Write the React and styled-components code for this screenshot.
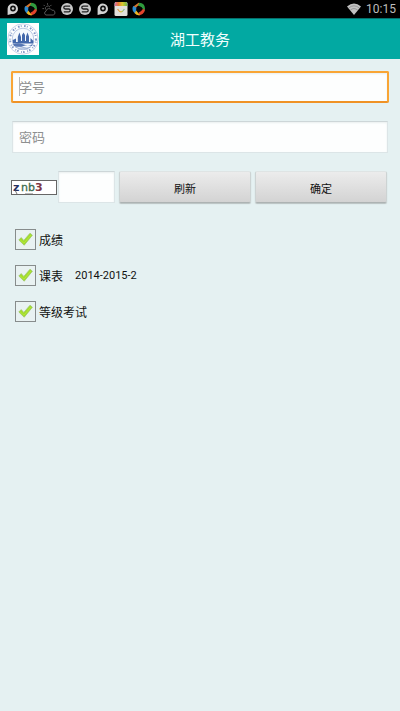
import React, { useState } from 'react';
import styled, { createGlobalStyle, css } from 'styled-components';

const GlobalStyle = createGlobalStyle`
    * {
        box-sizing: border-box;
    }
    body {
        margin: 0;
        background: #e5f1f2;
        color: #111;
        font-family: Roboto, "Noto Sans CJK SC", sans-serif;
    }
`;

const options = [
    { id: 'score', label: '成绩' },
    { id: 'timetable', label: '课表', term: '2014-2015-2' },
    { id: 'exam', label: '等级考试' },
];

function App() {
    const [studentId, setStudentId] = useState('');
    const [password, setPassword] = useState('');
    const [code, setCode] = useState('');
    const [checked, setChecked] = useState({ score: true, timetable: true, exam: true });

    const onToggle = (id) => {
        setChecked({ ...checked, [id]: !checked[id] });
    }

    return (
        <>
            <GlobalStyle />
            <StatusBar>
                <Notifications>
                    <PinIcon />
                    <PinwheelIcon />
                    <WeatherIcon />
                    <SogouIcon />
                    <SogouIcon />
                    <PinIcon />
                    <BagIcon />
                    <PinwheelIcon />
                </Notifications>
                <WifiIcon />
                <Clock>10:15</Clock>
            </StatusBar>
            <Header>
                <SchoolLogo />
                <Title>湖工教务</Title>
            </Header>
            <LoginForm onSubmit={(e) => e.preventDefault()}>
                <Field $active>
                    {studentId === '' && <Caret />}
                    <TextInput
                        type="text"
                        aria-label="学号"
                        placeholder="学号"
                        value={studentId}
                        onChange={(e) => setStudentId(e.target.value)}
                    />
                </Field>
                <Field>
                    <TextInput
                        type="password"
                        aria-label="密码"
                        placeholder="密码"
                        value={password}
                        onChange={(e) => setPassword(e.target.value)}
                    />
                </Field>
                <CodeRow>
                    <CodeGroup>
                        <Captcha />
                        <Field>
                            <TextInput
                                type="text"
                                aria-label="验证码"
                                value={code}
                                onChange={(e) => setCode(e.target.value)}
                            />
                        </Field>
                    </CodeGroup>
                    <Button type="button">刷新</Button>
                    <Button type="submit">确定</Button>
                </CodeRow>
                <Options>
                    {options.map(({ id, label, term }) => (
                        <Option key={id}>
                            <CheckBox>
                                <input
                                    id={id}
                                    type="checkbox"
                                    checked={checked[id]}
                                    onChange={() => onToggle(id)}
                                />
                                {checked[id] && <CheckMark />}
                            </CheckBox>
                            <label htmlFor={id}>{label}</label>
                            {term && <Term>{term}</Term>}
                        </Option>
                    ))}
                </Options>
            </LoginForm>
        </>
    );
}

const StatusBar = styled.div`
    display: flex;
    align-items: center;
    height: 18px;
    padding: 0 4px 0 6px;
    background: #000;
`;

const Notifications = styled.div`
    display: flex;
    flex: 1;
    gap: 4px;
`;

const StatusIcon = styled.svg.attrs({ viewBox: '0 0 14 14', 'aria-hidden': true })`
    display: block;
    width: 14px;
    height: 14px;
`;

const Clock = styled.span`
    margin-left: 5px;
    color: #bdbdbd;
    font-size: 12px;
    line-height: 18px;
`;

const Header = styled.header`
    display: grid;
    grid-template-columns: 32px 1fr 32px;
    align-items: center;
    height: 41px;
    padding: 0 7px;
    background: #02a9a2;
    border-top: 1px solid #04706c;
`;

const Title = styled.h1`
    margin: 0;
    color: #f2fffe;
    font-size: 15px;
    font-weight: 400;
    line-height: 26px;
    padding-top: 2px;
    text-align: center;
`;

const LoginForm = styled.form`
    display: flex;
    flex-direction: column;
    gap: 18px;
    padding: 12px 12px 0;
`;

const Field = styled.div`
    position: relative;
    height: 32px;
    background: #fdfefe;
    border: 1px solid #dce5e7;
    border-top-color: #cdd6d8;
    box-shadow: inset 0 1px 2px #e9efef;
    ${props => props.$active && css`
        margin: 0 -1px;
        border: 2px solid #f9a535;
        border-bottom-color: #ef9226;
        border-radius: 2px;
    `}
    input {
        padding: 0 6px;
    }
`;

const Caret = styled.span`
    position: absolute;
    top: 4px;
    left: 6px;
    width: 1px;
    height: 19px;
    background: #b5b8b8;
`;

const TextInput = styled.input`
    display: block;
    width: 100%;
    height: 100%;
    border: 0;
    outline: 0;
    background: transparent;
    color: #111;
    font-family: inherit;
    font-size: 13px;
    &::placeholder {
        color: #8d8f8f;
        opacity: 1;
    }
`;

const CodeRow = styled.div`
    display: grid;
    grid-template-columns: 104px 1fr 1fr;
    align-items: center;
    gap: 4px;
    margin: 0 1px 0 -1px;
`;

const CodeGroup = styled.div`
    display: grid;
    grid-template-columns: 46px 1fr;
    align-items: center;
    gap: 1px;
`;

const Button = styled.button`
    height: 32px;
    padding: 2px 0 0;
    border: 1px solid #cdd3d3;
    border-top-color: #dfe4e4;
    border-bottom-color: #adb3b3;
    border-radius: 2px;
    box-shadow: 0 1px 1px #b9c1c1;
    background: linear-gradient(#ececec, #d3d3d3);
    color: #111;
    font-family: inherit;
    font-size: 11px;
    cursor: pointer;
    &:active {
        background: #c8c8c8;
    }
`;

const Options = styled.ul`
    display: flex;
    flex-direction: column;
    gap: 15px;
    margin: 8px 0 0;
    padding: 0 3px;
    list-style: none;
`;

const Option = styled.li`
    display: flex;
    align-items: center;
    height: 21px;
    font-size: 12px;
`;

const CheckBox = styled.span`
    position: relative;
    width: 21px;
    height: 21px;
    margin-right: 3px;
    input {
        appearance: none;
        display: block;
        width: 100%;
        height: 100%;
        margin: 0;
        border: 1px solid #878c8c;
        background: #e9f2f2;
    }
    svg {
        position: absolute;
        top: 3px;
        left: 3px;
        pointer-events: none;
    }
`;

const Term = styled.span`
    margin-left: 12px;
    font-size: 11px;
`;

const LogoSvg = styled.svg`
    display: block;
    width: 32px;
    height: 32px;
    background: #fff;
`;

const CaptchaSvg = styled.svg`
    display: block;
    width: 46px;
    height: 15px;
    background: #fff;
    border: 1px solid #666;
    font-family: "DejaVu Sans", sans-serif;
    font-size: 11px;
`;

const CheckMark = () => (
    <svg width="15" height="15" viewBox="0 0 15 15" aria-hidden="true">
        <path d="M.8 8 3.2 5.6 5.8 8.4 12 1.2 14.4 3.2 6.2 13.2Z" fill="#a2dc2b" stroke="#9ac46a" strokeWidth=".7" strokeLinejoin="round" />
        <path d="M2.2 8 6 11.2 12.8 3.2" fill="none" stroke="#b4e83c" strokeWidth="1" />
    </svg>
)

const PinIcon = () => (
    <StatusIcon>
        <path d="M1.6 13V6.5A5.2 5.2 0 1 1 7 11.9H5.4Z" fill="#d2d2d2" />
        <circle cx="7" cy="6.5" r="2.9" fill="#111" />
        <circle cx="7" cy="6.5" r="1.3" fill="#d2d2d2" />
    </StatusIcon>
)

// each blade overlaps the next one around the dark middle
const PinwheelIcon = () => (
    <StatusIcon>
        <path d="M1.4 4.4 6.6.8 8.8 1.4 4.8 4.8 3 7Z" fill="#d6742b" />
        <path d="M7.4.8A6 6 0 0 1 13 6.4L12.6 9.2 9.6 5.2 5.8 3.6Z" fill="#2f9a3d" />
        <path d="M12.9 7.8A6 6 0 0 1 6.4 13.2L7.2 10.2 11 7Z" fill="#e2432c" />
        <path d="M8.2 13.2A6 6 0 0 1 2.4 11L3.4 7.4 5.4 10Z" fill="#efb521" />
        <path d="M2.6 11.2A6 6 0 0 1 1.2 4L4.6 5.8 4 9Z" fill="#2b8bd2" />
        <circle cx="7.2" cy="7.1" r="2.6" fill="#050505" />
    </StatusIcon>
)

const WeatherIcon = () => (
    <StatusIcon fill="none" stroke="#555" strokeWidth="1">
        <path d="M4 13A2 2 0 0 1 4 9.2 3.1 3.1 0 0 1 9.8 8.2 2.4 2.4 0 1 1 11.2 13Z" />
        <path d="M3.4 7.4A2.6 2.6 0 0 1 8 5.1M5.5 1.2V2.8M1.6 2.9 2.7 4M.4 6.6H2M9.4 2.9 8.4 4" />
    </StatusIcon>
)

const SogouIcon = () => (
    <StatusIcon>
        <circle cx="7" cy="7" r="6" fill="#c9c9c9" />
        <path d="M10.2 4.2H5.3Q3.8 4.2 3.8 5.6T5.3 7H8.7Q10.2 7 10.2 8.4T8.7 9.8H3.8" fill="none" stroke="#222" strokeWidth="1.3" />
    </StatusIcon>
)

const BagIcon = () => (
    <StatusIcon>
        <defs>
            <linearGradient id="rainbow">
                <stop offset="0" stopColor="#d667ad" />
                <stop offset=".3" stopColor="#e57a35" />
                <stop offset=".6" stopColor="#dcc72e" />
                <stop offset="1" stopColor="#62b64b" />
            </linearGradient>
            <linearGradient id="smile">
                <stop offset="0" stopColor="#e58a4a" />
                <stop offset=".5" stopColor="#e0c23a" />
                <stop offset="1" stopColor="#6fc0a0" />
            </linearGradient>
        </defs>
        <rect x=".5" y="0" width="13" height="14" rx="1.5" fill="#e2dfda" />
        <path d="M1.5 0H12.5L13.5 4H.5Z" fill="url(#rainbow)" />
        <path d="M3.6 7Q7 12.6 10.4 7" fill="none" stroke="url(#smile)" strokeWidth="1.2" />
    </StatusIcon>
)

const WifiIcon = () => (
    <StatusIcon>
        <path d="M0 4.4Q7-1.2 14 4.4L7 13Z" fill="#c2c2c2" />
        <path d="M1.6 6Q7 1.6 12.4 6M3.3 8.1Q7 5 10.7 8.1" fill="none" stroke="#777" strokeWidth=".6" />
    </StatusIcon>
)

const SchoolLogo = () => (
    <LogoSvg viewBox="0 0 32 32" role="img" aria-label="校徽">
        <circle cx="16" cy="16" r="15.2" fill="none" stroke="#b3c2e0" strokeWidth=".7" />
        <circle cx="16" cy="16" r="13" fill="none" stroke="#8299c8" strokeWidth="2" strokeDasharray="1.6 1.2 .8 2.6" />
        <circle cx="16" cy="16" r="10.8" fill="#f6f9fd" stroke="#8fa6d1" strokeWidth=".6" />
        <path d="M5.8 20.6V17L9 15.4V19H10.8V14L12.4 9.5 14 14V18H15V12L16.5 9.5 18 12V18H19V13.5L20.5 9.5 22 13.5V19H23.5V15L26.4 18V20.6Z" fill="#4468ab" />
        <path d="M6 21.2Q11 19.2 16 21.2T26 21.2L25 23Q20 21.4 16 23.2T7 23Z" fill="#5676b4" />
        <path d="M8.5 24.4Q12 23 16 24.4T23.5 24.4M11 25.8H21" fill="none" stroke="#8aa1cd" strokeWidth=".8" />
    </LogoSvg>
)

const Captcha = () => (
    <CaptchaSvg role="img" aria-label="验证码图片">
        <text x="1" y="10" fill="#26305f" fontWeight="700">z</text>
        <text x="9" y="10" fill="#3d6b4d" stroke="#3d6b4d" strokeWidth=".3">nb</text>
        <text x="23" y="10" fill="#7e3545" fontWeight="700">3</text>
        <path d="M3 9 5 13M13 13H21" stroke="#555" strokeWidth=".8" />
    </CaptchaSvg>
)

export default App;
